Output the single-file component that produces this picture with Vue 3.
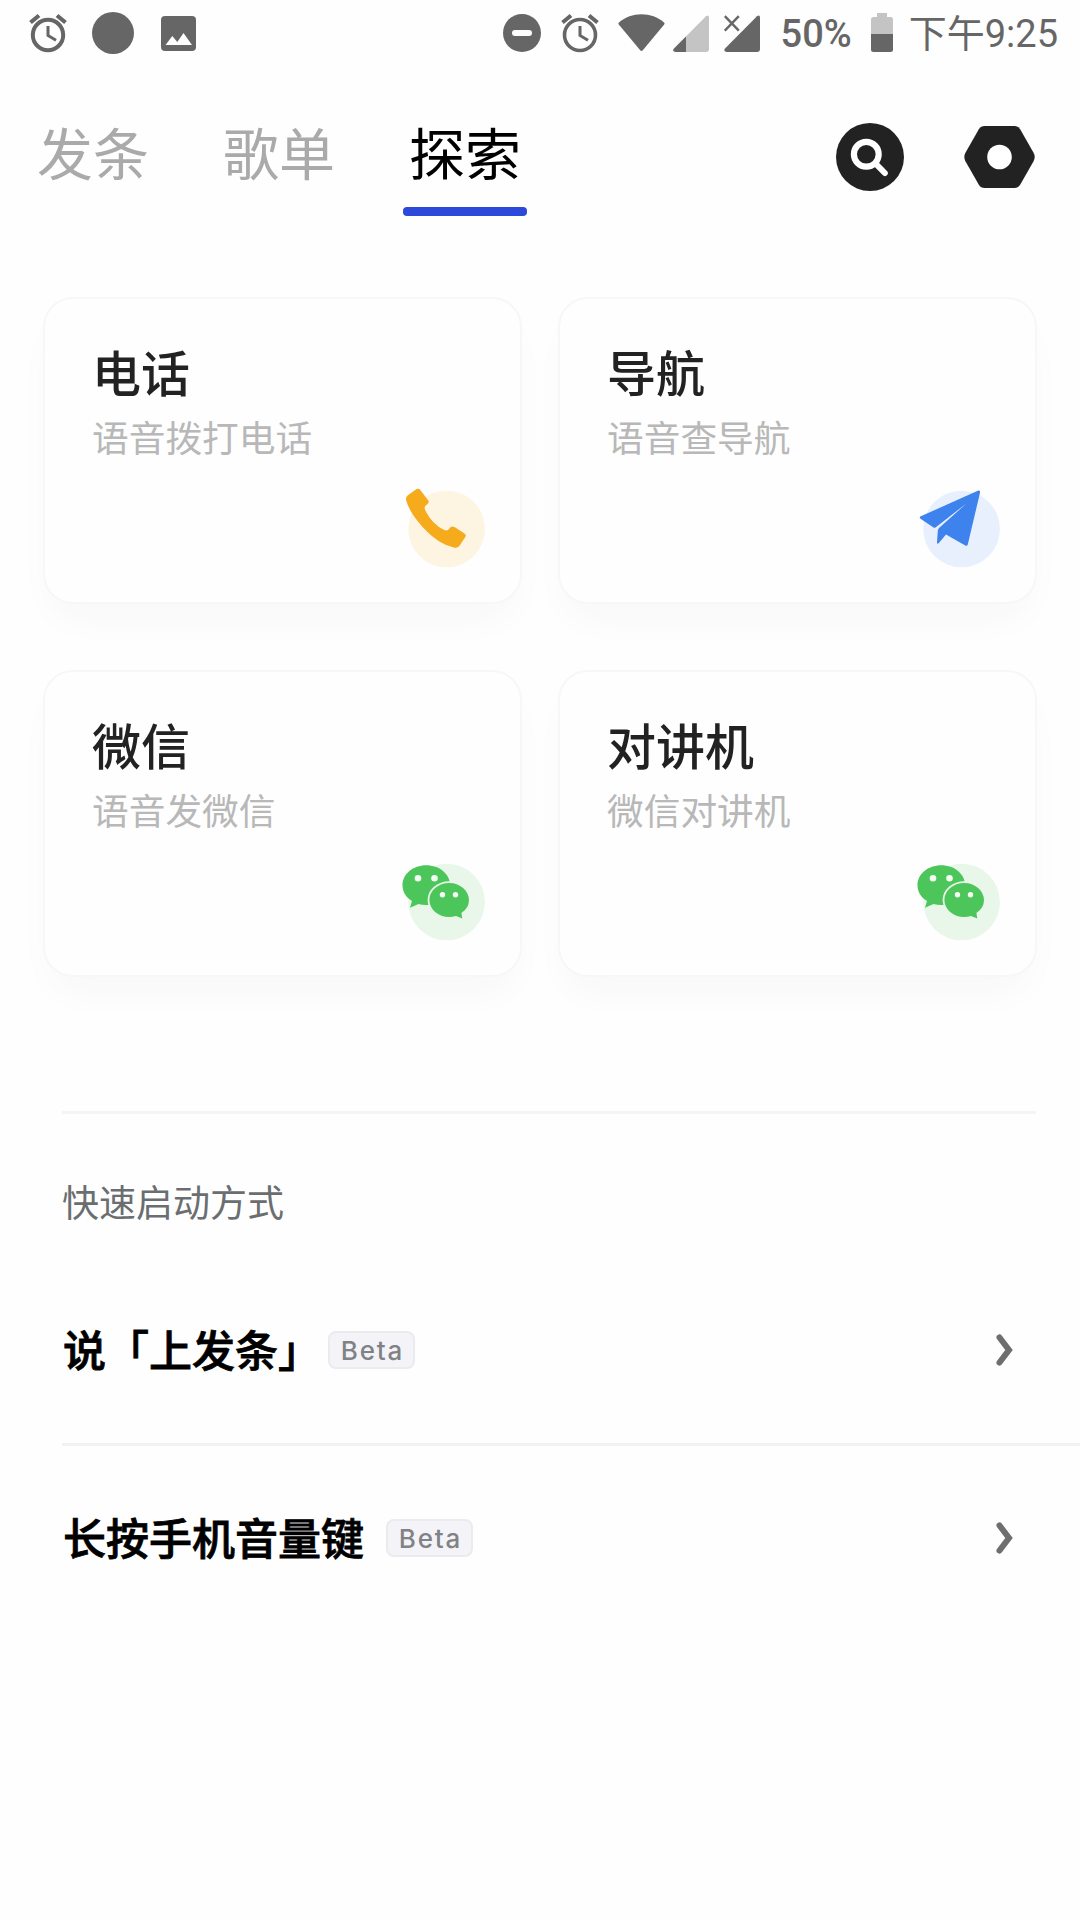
<script setup>
/**
 * Explore page — voice feature cards and quick launch settings.
 */
import { ref } from 'vue';

// ─── State ──────────────────────────────────────────────────────────
const tabs = ['发条', '歌单', '探索'];
const activeTab = ref('探索');

const cards = [
  { title: '电话', desc: '语音拨打电话', icon: 'phone' },
  { title: '导航', desc: '语音查导航', icon: 'plane' },
  { title: '微信', desc: '语音发微信', icon: 'wechat' },
  { title: '对讲机', desc: '微信对讲机', icon: 'wechat' },
];

const launchers = [
  { label: '说「上发条」', tag: 'Beta', bracket: true },
  { label: '长按手机音量键', tag: 'Beta', bracket: false },
];
</script>

<template>
  <div class="page">
    <header class="status-bar">
      <div class="status-left">
        <svg class="alarm" width="38" height="40" viewBox="0 0 38 40">
          <circle cx="19" cy="22" r="15.2" fill="none" stroke="#666" stroke-width="4" />
          <path d="M19 13v9.5l8 4.8" fill="none" stroke="#666" stroke-width="3" />
          <path d="M1.5 9.5l8.500-7M36.500 9.500l-8.500-7" stroke="#666" stroke-width="4.200" />
        </svg>
        <span class="dot"></span>
        <svg class="photo" width="35" height="35" viewBox="0 0 35 35">
          <rect width="35" height="35" rx="4" fill="#666" />
          <path d="M4.500 29l6.800-9 5 6 6.200-9 8.500 12z" fill="#fefefe" />
        </svg>
      </div>
      <div class="status-right">
        <svg class="dnd" width="38" height="38" viewBox="0 0 38 38">
          <circle cx="19" cy="19" r="19" fill="#666" />
          <rect x="9" y="16" width="20" height="6" rx="3" fill="#fefefe" />
        </svg>
        <svg class="alarm-right" width="38" height="40" viewBox="0 0 38 40">
          <circle cx="19" cy="22" r="15.500" fill="none" stroke="#666" stroke-width="3.600" />
          <path d="M19 13v9.500l8 4.800" fill="none" stroke="#666" stroke-width="3" />
          <path d="M1.500 9.500l8.500-7M36.500 9.500l-8.500-7" stroke="#666" stroke-width="4" />
        </svg>
        <svg class="wifi" width="47" height="38" viewBox="0 0 47 38">
          <path d="M1 8.500C13-2.500 34-2.500 46 8.500q1 1 .2 2L25 36q-1.500 1.800-3 0L.8 10.500q-.8-1 .2-2z" fill="#666" />
        </svg>
        <svg class="signal" width="36" height="37" viewBox="0 0 36 37">
          <path d="M1 33.500L33 1.300Q36-.8 36 3v31q0 3-3 3H2.500Q-1 36.500 1 33.500z" fill="#c4c4c4" />
          <path d="M1 33.500L13 21.500V37H2.500Q-1 36.500 1 33.500z" fill="#666" />
        </svg>
        <svg class="signal-off" width="36" height="37" viewBox="0 0 36 37">
          <path d="M1 33.500L33 1.300Q36-.8 36 3v31q0 3-3 3H2.500Q-1 36.500 1 33.500z" fill="#666" />
          <path d="M.8 1.200l14 14.500M14.800 1.200L.8 15.700" stroke="#666" stroke-width="2.400" />
        </svg>
        <span class="percent">50%</span>
        <svg class="battery" width="22" height="40" viewBox="0 0 22 40">
          <path d="M6 0h10v4h3.500Q22 4 22 6.500V21H0V6.500Q0 4 2.500 4H6z" fill="#c4c4c4" />
          <path d="M0 21h22v15.500q0 2.500-2.500 2.500h-17Q0 39 0 36.500z" fill="#666" />
        </svg>
        <span class="time">下午9:25</span>
      </div>
    </header>

    <nav class="nav">
      <div class="tabs">
        <div
          v-for="tab in tabs"
          :key="tab"
          class="tab"
          :class="{ active: tab === activeTab }"
          @click="activeTab = tab"
        >
          <span class="tab-text">{{ tab }}</span>
          <span class="tab-line"></span>
        </div>
      </div>
      <div class="actions">
        <svg width="68" height="68" viewBox="0 0 68 68">
          <circle cx="34" cy="34" r="34" fill="#222" />
          <circle cx="30.300" cy="31.300" r="12.400" fill="none" stroke="#fff" stroke-width="6.200" />
          <path d="M39.500 40.500l9.300 9.500" stroke="#fff" stroke-width="6" stroke-linecap="round" />
        </svg>
        <svg width="71" height="62" viewBox="0 0 72 63">
          <path
            d="M21 0h30q4 0 6 3.300l13.600 24q2.300 4.200 0 8.400L57 59.700Q55 63 51 63H21q-4 0-6-3.300L1.400 35.700q-2.300-4.200 0-8.400L15 3.300Q17 0 21 0z"
            fill="#222"
          />
          <circle cx="36" cy="31.500" r="12.500" fill="#fff" />
        </svg>
      </div>
    </nav>

    <section class="cards">
      <div v-for="card in cards" :key="card.title" class="card">
        <div class="card-title">{{ card.title }}</div>
        <div class="card-desc">{{ card.desc }}</div>
        <svg class="card-icon" width="90" height="86" viewBox="0 0 90 86">
          <template v-if="card.icon === 'phone'">
            <circle cx="48.600" cy="46" r="38.300" fill="#fef4e2" />
            <path
              d="M18.300 6.200q2.600-1.200 4.200 1l7.600 10q1.400 2-.4 3.600l-2.200 2q-1.600 2-.2 4.600 7 14 19 19.600 2.400 1 4.200-.5l2-2.200q1.800-1.600 4-.3l10 6.500q2 1.500.8 3.600l-5.600 8.400q-1.800 2.600-5 2.200Q41 62 25 44.500 11.500 29.500 8.200 17.500q-.8-3.200 1.600-5.200z"
              fill="#f5ab1c"
            />
          </template>
          <template v-else-if="card.icon === 'plane'">
            <circle cx="48.600" cy="46" r="38.300" fill="#e8f0fd" />
            <path
              d="M64.800 7.700q2.600-.6 2.200 2L54.800 61.500q-.7 1.800-2.500 1L33 51.600l-7.400 8.600q-1.600 1.200-1.600-.6l.8-11.800q.2-1.600 1.200-2.800L53.400 20.500 22.500 44.400q-1 .7-2 .1L7.500 35.800q-1.600-1.400.3-2.500z"
              fill="#3e82ee"
            />
          </template>
          <template v-else>
            <circle cx="48.600" cy="46" r="38.300" fill="#e8f7e9" />
            <path
              d="M28.200 9.200c13.200 0 23.800 8.700 23.800 19.800s-10.600 20-23.800 20q-4.200 0-7.700-1L12 51.800l2-6.800C8 41.500 4.500 36 4.500 29 4.500 18 15 9.200 28.200 9.200z"
              fill="#4cc65a"
            />
            <ellipse cx="51.200" cy="44" rx="21.600" ry="18.700" fill="#e8f7e9" />
            <path
              d="M51.200 27C62 27 71 34.600 71 44q0 8-7.600 13l.9 5.600-6.300-2.600q-3.300 1-6.800 1c-11 0-19.800-7.600-19.800-17S40.200 27 51.200 27z"
              fill="#4cc65a"
            />
            <g fill="#f4fdf4">
              <circle cx="20" cy="22.300" r="3.300" />
              <circle cx="36.500" cy="22.300" r="3.300" />
              <circle cx="44.500" cy="38.700" r="2.700" />
              <circle cx="57.500" cy="38.700" r="2.700" />
            </g>
          </template>
        </svg>
      </div>
    </section>

    <section class="launch">
      <div class="launch-title">快速启动方式</div>
      <div v-for="item in launchers" :key="item.label" class="launch-row">
        <span class="launch-label" :class="{ bracket: item.bracket }">{{ item.label }}</span>
        <span class="tag">{{ item.tag }}</span>
        <svg class="chevron" width="18" height="34" viewBox="0 0 18 34">
          <path d="M3.500 4.500L13 17 3.500 29.500" fill="none" stroke="#6e6e6e" stroke-width="6" stroke-linecap="round" />
        </svg>
      </div>
    </section>
  </div>
</template>

<style>
body {
  background: #fefefe;
}
</style>

<style scoped>
.page {
  width: 1080px;
  height: 1920px;
  overflow: hidden;
  background: #fefefe;
  font-family: Roboto, 'Noto Sans CJK SC', sans-serif;
}
.status-bar {
  display: flex;
  justify-content: space-between;
  height: 66px;
  padding: 0 22px 0 29px;
  color: #666;
}
.status-left,
.status-right {
  display: flex;
  align-items: center;
}
.dot {
  width: 42px;
  height: 42px;
  margin: 0 27px 0 25px;
  border-radius: 50%;
  background: #666;
}
.alarm-right {
  margin-left: 20px;
}
.wifi {
  margin-left: 19px;
}
.signal {
  margin-left: 8px;
}
.signal-off {
  margin-left: 15px;
}
.percent {
  margin-left: 21px;
  padding-top: 2px;
  font-size: 38px;
  font-weight: 500;
}
.battery {
  margin-left: 19px;
}
.time {
  margin-left: 16px;
  padding-bottom: 5px;
  font-size: 38px;
}
.nav {
  display: flex;
  justify-content: space-between;
  height: 231px;
  padding-right: 45px;
}
.tabs {
  display: flex;
}
.tab {
  display: flex;
  flex-direction: column;
  align-items: center;
  width: 186px;
  padding-top: 50px;
  color: #aaa;
}
.tab-text {
  font-size: 56px;
  line-height: 80px;
}
.tab-line {
  width: 124px;
  height: 9px;
  margin-top: 11px;
  border-radius: 4px;
}
.tab.active {
  color: #000;
}
.tab.active .tab-line {
  background: #2d49d9;
}
.actions {
  display: flex;
  align-items: center;
  gap: 60px;
  height: 68px;
  margin-top: 57px;
}
.cards {
  display: grid;
  grid-template-columns: 479px 479px;
  gap: 66px 36px;
  padding-left: 43px;
}
.card {
  position: relative;
  box-sizing: border-box;
  height: 307px;
  padding: 42px 47px;
  border: 2px solid #f7f7f7;
  border-radius: 30px;
  background: #fefefe;
  box-shadow: 0 22px 40px -12px rgba(40, 50, 90, 0.04);
}
.card-title {
  font-size: 49px;
  font-weight: 500;
  line-height: 70px;
  color: #222;
}
.card-desc {
  margin-top: 3px;
  font-size: 36.700px;
  line-height: 52px;
  color: #b8b8b8;
}
.card-icon {
  position: absolute;
  top: 184px;
  left: 353px;
}
.launch {
  margin: 134px 0 0 62px;
}
.launch-title {
  width: 974px;
  padding: 65px 0 25px;
  border-top: 3px solid #f4f4f4;
  font-size: 37px;
  line-height: 52px;
  color: #6b6e70;
}
.launch-row {
  display: flex;
  align-items: center;
  box-sizing: border-box;
  height: 187px;
  padding-right: 66px;
}
.launch-row + .launch-row {
  border-top: 3px solid #f2f2f2;
}
.launch-label {
  margin: 0 22px 0 1px;
  padding-top: 4px;
  font-size: 43px;
  font-weight: 500;
  line-height: 60px;
  color: #000;
  -webkit-text-stroke: 0.800px #000;
}
/* The closing bracket carries half an em of blank on its right */
.launch-label.bracket {
  margin-right: 7px;
}
.tag {
  box-sizing: border-box;
  width: 87px;
  height: 38px;
  border: 2px solid #ebebee;
  border-radius: 8px;
  background: #f4f4f8;
  font-family: Inter, sans-serif;
  font-size: 26px;
  font-weight: 500;
  line-height: 35px;
  letter-spacing: 1.800px;
  text-align: center;
  text-indent: 2px;
  color: #808285;
}
.chevron {
  margin-left: auto;
}
</style>
